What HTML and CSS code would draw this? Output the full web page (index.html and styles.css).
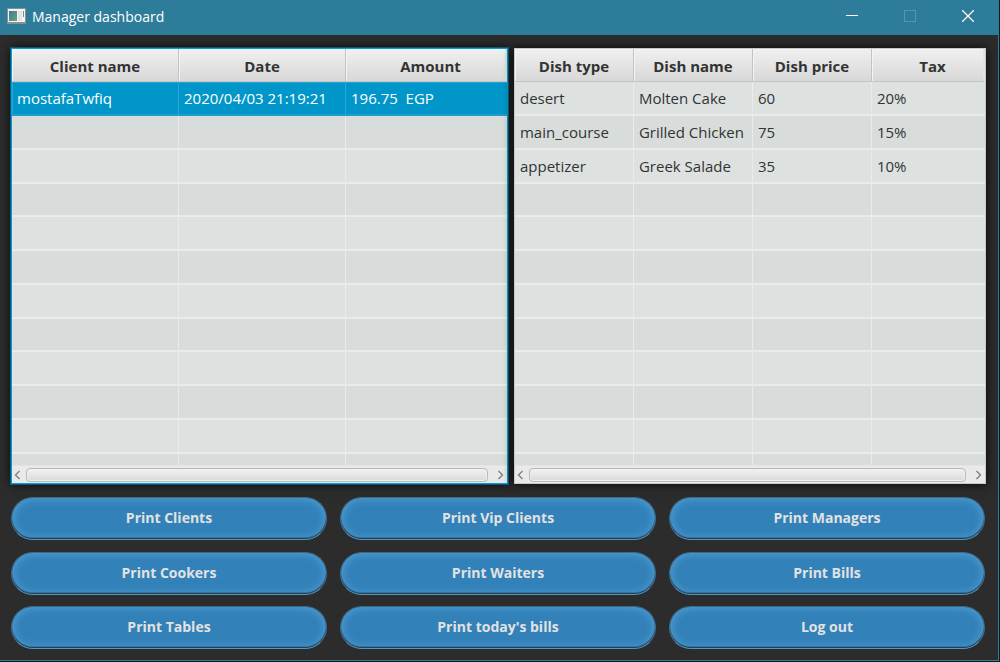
FILE: index.html
```html
<!DOCTYPE html>
<html lang="en">
<head>
<meta charset="utf-8">
<title>Manager dashboard</title>
<link rel="stylesheet" href="styles.css">
</head>
<body>
<div class="window">
  <header class="titlebar">
    <svg class="app-icon" width="19" height="16" viewBox="0 0 19 16" aria-hidden="true">
      <defs><linearGradient id="pane" x1="0" y1="0" x2="1" y2="1"><stop offset="0" stop-color="#3f74a8"/><stop offset="1" stop-color="#5fae68"/></linearGradient></defs>
      <rect x="0" y="0" width="19" height="16" fill="#8b8f92"/>
      <rect x="1" y="1" width="17" height="13" fill="#f4f4f4"/>
      <rect x="2" y="3" width="8" height="10" fill="url(#pane)"/>
      <rect x="11" y="3" width="4" height="10" fill="#e4e4e4"/>
      <rect x="16" y="3" width="1" height="6" fill="#5b9a8c"/>
    </svg>
    <h1 class="title">Manager dashboard</h1>
    <div class="window-controls">
      <button class="control" aria-label="Minimize"><svg width="12" height="12" viewBox="0 0 12 12"><path d="M0 5.5H12" stroke="#fff"/></svg></button>
      <button class="control" aria-label="Maximize" disabled><svg width="12" height="12" viewBox="0 0 12 12"><rect x=".5" y=".5" width="11" height="11" fill="none" stroke="#5297b2"/></svg></button>
      <button class="control" aria-label="Close"><svg width="12" height="12" viewBox="0 0 12 12"><path d="M0 0L12 12M12 0L0 12" stroke="#fff" stroke-width="1.3"/></svg></button>
    </div>
  </header>
  <main class="content">
    <div class="tables">
      <section class="panel panel-bills focused">
        <div class="table-view">
          <table class="grid">
            <colgroup><col class="col-third"><col class="col-third"><col></colgroup>
            <thead><tr><th>Client name</th><th>Date</th><th>Amount</th></tr></thead>
            <tbody>
              <tr class="selected"><td>mostafaTwfiq</td><td>2020/04/03 21:19:21</td><td>196.75&nbsp; EGP</td></tr>
              <tr><td></td><td></td><td></td></tr>
              <tr><td></td><td></td><td></td></tr>
              <tr><td></td><td></td><td></td></tr>
              <tr><td></td><td></td><td></td></tr>
              <tr><td></td><td></td><td></td></tr>
              <tr><td></td><td></td><td></td></tr>
              <tr><td></td><td></td><td></td></tr>
              <tr><td></td><td></td><td></td></tr>
              <tr><td></td><td></td><td></td></tr>
              <tr><td></td><td></td><td></td></tr>
              <tr class="partial"><td></td><td></td><td></td></tr>
            </tbody>
          </table>
        </div>
        <div class="scrollbar">
          <button class="arrow" aria-label="Scroll left"><svg width="7" height="10" viewBox="0 0 7 10"><path d="M5.5 1L1.5 5L5.5 9" fill="none" stroke="#808080" stroke-width="1.4"/></svg></button>
          <div class="thumb"></div>
          <button class="arrow arrow-right" aria-label="Scroll right"><svg width="7" height="10" viewBox="0 0 7 10"><path d="M1.5 1L5.5 5L1.5 9" fill="none" stroke="#808080" stroke-width="1.4"/></svg></button>
        </div>
      </section>
      <section class="panel panel-dishes">
        <div class="table-view">
          <table class="grid">
            <colgroup><col class="col-quarter"><col class="col-quarter"><col class="col-quarter"><col></colgroup>
            <thead><tr><th>Dish type</th><th>Dish name</th><th>Dish price</th><th>Tax</th></tr></thead>
            <tbody>
              <tr><td>desert</td><td>Molten Cake</td><td>60</td><td>20%</td></tr>
              <tr><td>main_course</td><td>Grilled Chicken</td><td>75</td><td>15%</td></tr>
              <tr><td>appetizer</td><td>Greek Salade</td><td>35</td><td>10%</td></tr>
              <tr><td></td><td></td><td></td><td></td></tr>
              <tr><td></td><td></td><td></td><td></td></tr>
              <tr><td></td><td></td><td></td><td></td></tr>
              <tr><td></td><td></td><td></td><td></td></tr>
              <tr><td></td><td></td><td></td><td></td></tr>
              <tr><td></td><td></td><td></td><td></td></tr>
              <tr><td></td><td></td><td></td><td></td></tr>
              <tr><td></td><td></td><td></td><td></td></tr>
              <tr class="partial"><td></td><td></td><td></td><td></td></tr>
            </tbody>
          </table>
        </div>
        <div class="scrollbar">
          <button class="arrow" aria-label="Scroll left"><svg width="7" height="10" viewBox="0 0 7 10"><path d="M5.5 1L1.5 5L5.5 9" fill="none" stroke="#808080" stroke-width="1.4"/></svg></button>
          <div class="thumb"></div>
          <button class="arrow arrow-right" aria-label="Scroll right"><svg width="7" height="10" viewBox="0 0 7 10"><path d="M1.5 1L5.5 5L1.5 9" fill="none" stroke="#808080" stroke-width="1.4"/></svg></button>
        </div>
      </section>
    </div>
    <div class="actions">
      <button class="action">Print Clients</button>
      <button class="action">Print Vip Clients</button>
      <button class="action">Print Managers</button>
      <button class="action">Print Cookers</button>
      <button class="action">Print Waiters</button>
      <button class="action">Print Bills</button>
      <button class="action">Print Tables</button>
      <button class="action">Print today's bills</button>
      <button class="action">Log out</button>
    </div>
  </main>
</div>
</body>
</html>
```
FILE: styles.css
```css
* { box-sizing: border-box; }

body {
  margin: 0;
  min-height: 100vh;
  display: flex;
  padding: 0 1px 1px 0;
  background: #101a20;
  font-family: "Open Sans", "Noto Sans", sans-serif;
  font-variant-ligatures: none;
  color: #333;
}

button { font: inherit; cursor: pointer; }

.window {
  flex: 1;
  display: flex;
  flex-direction: column;
  border: solid #2d7d9a;
  border-width: 0 1px 1px 0;
  background: #2c2c2c;
}

.titlebar {
  height: 35px;
  display: flex;
  align-items: center;
  padding: 0 1px 3px 7px;
  background: #2d7d9a;
}

.title {
  flex: 1;
  margin: 0 0 0 6px;
  padding-top: 1px;
  font-size: 14px;
  font-weight: 400;
  color: #fff;
}

.window-controls { display: flex; }

.control {
  width: 58px;
  height: 32px;
  padding: 0;
  display: flex;
  align-items: center;
  justify-content: center;
  border: 0;
  background: none;
}

.content {
  flex: 1;
  display: flex;
  flex-direction: column;
  gap: 13px;
  padding: 13px 12px 11px 11px;
}

.tables { display: flex; gap: 6px; }

.panel {
  min-width: 0;
  border: 1px solid #c8c8c8;
  background: #dde2e0;
  box-shadow: 0 0 10px rgba(0, 0, 0, 0.9);
}
.panel-bills { flex: 497; }
.panel-dishes { flex: 472; }
.focused {
  border-color: #039ed3;
  box-shadow: 0 0 0 1px #0b5877, 0 0 10px rgba(0, 0, 0, 0.9);
}

.table-view { overflow: hidden; }

.grid {
  width: 100%;
  table-layout: fixed;
  border-collapse: separate;
  border-spacing: 0;
  font-size: 15px;
  line-height: 20px;
}
.col-third { width: 167px; }
.col-quarter { width: 119px; }

.grid th {
  height: 33px;
  padding: 2px 0 0;
  border: solid #c3c3c3;
  border-width: 0 1px 1px 0;
  background: linear-gradient(#f0f0f0, #d8d8d8);
  box-shadow: inset 1px 1px #f4f4f4;
  font-weight: 700;
}
.grid th:last-child {
  padding-left: 10px;
  border-right: 2px solid #e0e3e2;
}

.grid td {
  height: 34px;
  padding: 0 0 0 5px;
  border: solid #e9eceb;
  border-width: 0 1px 2px 0;
  white-space: nowrap;
}
.grid td:last-child { border-right: 0; }
.grid tbody tr:nth-child(even) { background: #d8dddb; }
.grid tr:nth-child(4n) td { height: 33px; }
.grid tbody .partial td { height: 11px; padding: 0; border-bottom: 0; }

.grid .selected { background: #0096c9; color: #fff; }
.grid .selected td {
  border-color: #29a6d1;
  border-bottom-color: #1c9fcd;
  box-shadow: inset 0 1px #29a6d1;
}
.grid .selected td:first-child { box-shadow: inset 1px 1px #29a6d1; }

.scrollbar {
  height: 18px;
  display: flex;
  align-items: center;
  border-top: 1px solid #e4e4e4;
  background: #e9e9e9;
}
.arrow {
  width: 14px;
  height: 16px;
  padding: 0 0 0 2px;
  display: flex;
  align-items: center;
  border: 0;
  background: none;
}
.arrow-right { width: 19px; padding-left: 9px; }
.thumb {
  flex: 1;
  height: 14px;
  border: 1px solid #b8b8b8;
  border-radius: 4px;
  background: linear-gradient(#f2f2f2, #d9d9d9);
  box-shadow: inset 0 0 0 1px #f0f0f0;
}

.actions {
  flex: 1;
  display: grid;
  grid-template-columns: repeat(3, 1fr);
  gap: 11px 13px;
  align-content: space-between;
  padding-right: 1px;
}
.action {
  height: 43px;
  padding: 0 0 2px;
  border: 1px solid #3e6988;
  border-bottom-color: #5295c2;
  border-radius: 22px;
  background: #3281b9;
  box-shadow: inset 0 -1px #203f55, inset 0 -2px #3e7198, inset 0 0 10px #57a6da;
  color: #e2e2e2;
  font-size: 14px;
  font-weight: 700;
}
```
